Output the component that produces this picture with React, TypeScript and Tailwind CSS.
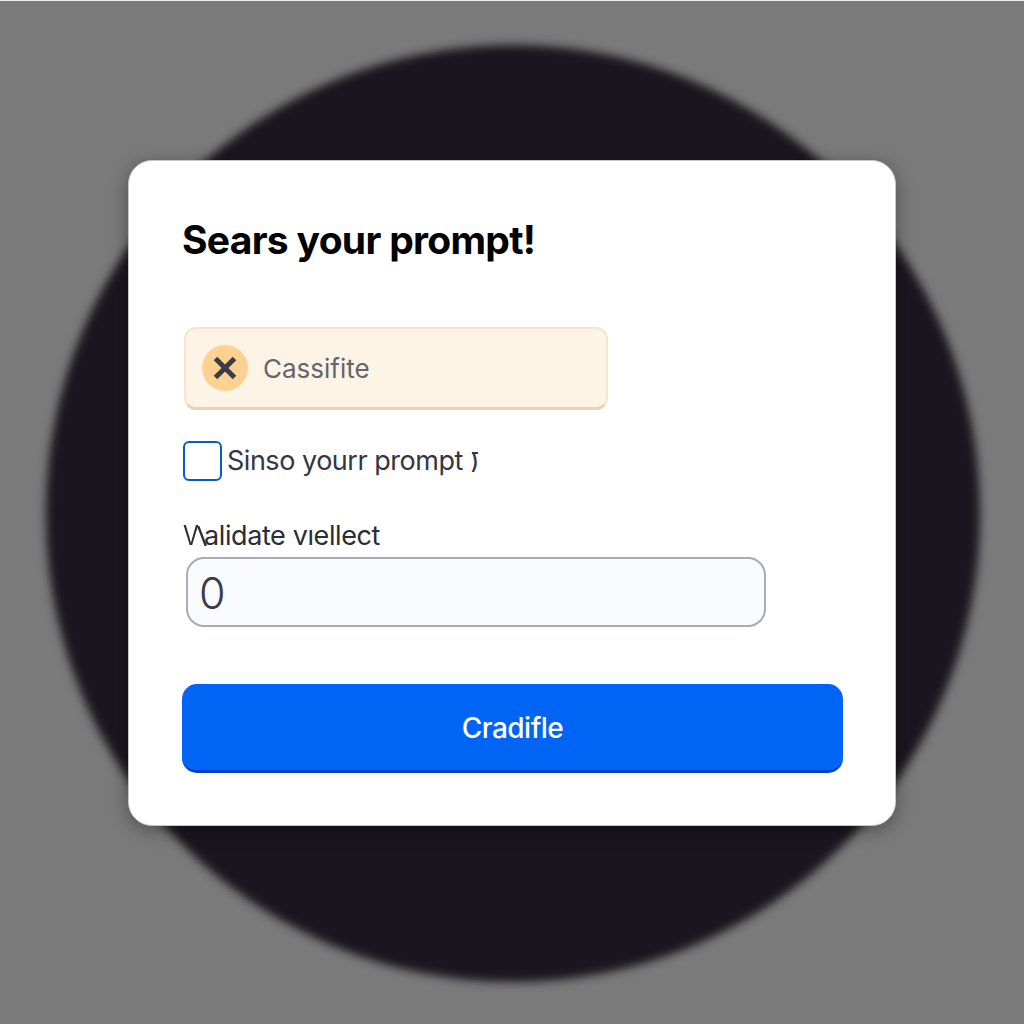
export default function App() {
  return (
    <main className="relative flex h-screen w-full flex-col overflow-hidden border-t border-[#f0f0f0] bg-[#7a7a7a] pt-[159px] font-['Inter',sans-serif]">
      <div className="absolute top-[44px] left-[46px] h-[937px] w-[934px] rounded-full bg-[#19161f] blur-[5px]" />
      <form
        className="relative ml-[128px] flex h-[666px] w-[768px] flex-col items-start rounded-[24px] border border-[#c9c9c9] bg-white pl-[53px] shadow-[0_4px_18px_rgba(0,0,0,0.35)]"
        onSubmit={(e) => e.preventDefault()}
      >
        <h1 className="mt-[55px] h-[48px] text-[39px] leading-[48px] font-bold tracking-[-0.7px] whitespace-nowrap text-black">
          Sears your prompt!
        </h1>

        <div className="mt-[63px] ml-[2px] flex h-[83px] w-[424px] items-center rounded-[12px] border-2 border-b-[3px] border-[#f6e5ca] border-b-[#ebd3ab] bg-[#fef4e6] pl-[16px]">
          <span className="flex size-[46px] items-center justify-center rounded-full bg-[#fdd191]">
            <svg viewBox="0 0 24 24" className="size-[24px]" fill="none" stroke="#3c3c47" strokeWidth="5">
              <path d="M2.5 2.5 21.5 21.5M21.5 2.5 2.5 21.5" />
            </svg>
          </span>
          <span className="mt-px ml-[15px] text-[26px] leading-[32px] whitespace-nowrap text-[#62656f]">Cassifite</span>
        </div>

        <label className="mt-[31px] ml-px flex h-[40px] items-center">
          <span className="h-[40px] w-[39px] rounded-[6px] border-2 border-[#0a5cc4] bg-white" />
          <span className="ml-[5px] text-[27px] leading-[32px] tracking-[-0.48px] whitespace-nowrap text-[#34363f]">Sinso yourr prompt</span>
          <span className="relative ml-[8px] text-[22px] leading-[32px] font-medium text-[#34363f]">
            )
            <span className="absolute top-[7px] left-px h-[2px] w-[6px] bg-[#34363f]" />
          </span>
        </label>

        <label className="mt-[39px] ml-px flex h-[32px] text-[27px] leading-[32px] whitespace-nowrap text-[#2a2c36]">
          <span className="w-[18px] origin-left scale-x-[0.85]">V</span>
          <svg viewBox="0 0 10 20" className="mt-[6px] -ml-[4px] h-[20px] w-[10px]" fill="none" stroke="currentColor" strokeWidth="2.3">
            <path d="M1.2 0 8.8 20" />
          </svg>
          <span className="-ml-[3px] tracking-[-0.4px]">alidate vıellect</span>
        </label>
        <div className="mt-[5px] ml-[4px] flex h-[70px] w-[580px] items-center rounded-[18px] border-2 border-[#aaaab8] bg-[#fafbfe] pl-[11px]">
          <span className="mt-[2px] text-[43px] leading-none font-light text-[#3a3b49]">0</span>
        </div>

        <button className="mt-[57px] flex h-[89px] w-[661px] items-center justify-center rounded-[15px] border-b-[3px] border-[#0040c4] bg-[#0065f5] pt-[2px] text-[28px] font-medium tracking-[-0.5px] text-white">
          Cradifle
        </button>
      </form>
    </main>
  );
}
